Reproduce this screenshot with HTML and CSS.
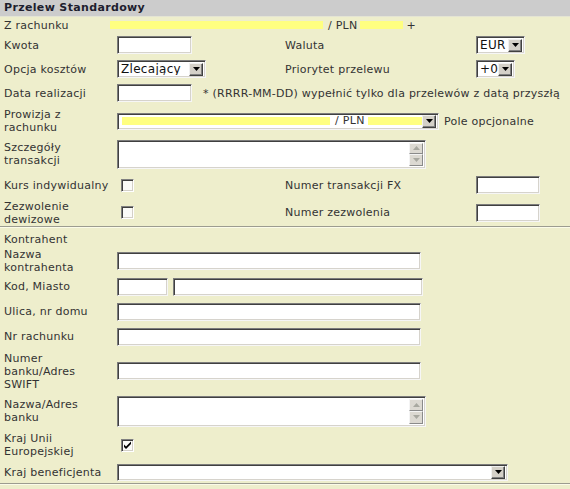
FILE: index.html
```html
<!DOCTYPE html>
<html lang="pl">
<head>
<meta charset="utf-8">
<title>Przelew Standardowy</title>
<link rel="stylesheet" href="styles.css">
</head>
<body>
<div class="head">Przelew Standardowy</div>

<div class="row h16">
  <span class="lbl lbl-short">Z rachunku</span>
  <span class="hl hl-a"></span><span class="acc">/ PLN</span><span class="hl hl-b"></span><span class="plus">+</span>
</div>

<div class="row h24">
  <span class="lbl">Kwota</span>
  <span class="c2"><input class="inp w75" type="text"></span>
  <span class="c3">Waluta</span>
  <span class="sel w49"><span class="sel-val">EUR</span><span class="sel-btn"><svg width="7" height="4" viewBox="0 0 7 4"><path d="M0 0h7L3.5 4z"/></svg></span></span>
</div>

<div class="row h24">
  <span class="lbl">Opcja kosztów</span>
  <span class="c2"><span class="sel w89"><span class="sel-val">Zlecający</span><span class="sel-btn"><svg width="7" height="4" viewBox="0 0 7 4"><path d="M0 0h7L3.5 4z"/></svg></span></span></span>
  <span class="c3">Priorytet przelewu</span>
  <span class="sel w39"><span class="sel-val">+0</span><span class="sel-btn"><svg width="7" height="4" viewBox="0 0 7 4"><path d="M0 0h7L3.5 4z"/></svg></span></span>
</div>

<div class="row h24">
  <span class="lbl">Data realizacji</span>
  <input class="inp w75" type="text">
  <span class="note">* (RRRR-MM-DD) wypełnić tylko dla przelewów z datą przyszłą</span>
</div>

<div class="row h32">
  <span class="lbl">Prowizja z rachunku</span>
  <span class="sel w322 sel-17"><span class="sel-val"><span class="hl hl-c"></span><span class="acc">/ PLN</span><span class="hl hl-d"></span></span><span class="sel-btn"><svg width="7" height="4" viewBox="0 0 7 4"><path d="M0 0h7L3.5 4z"/></svg></span></span>
  <span class="opt">Pole opcjonalne</span>
</div>

<div class="row h34">
  <span class="lbl">Szczegóły transakcji</span>
  <span class="ta w309"><span class="ta-body"></span><span class="ta-bar"><span class="sb-btn"><svg width="7" height="4" viewBox="0 0 7 4"><path d="M0 4h7L3.5 0z"/></svg></span><span class="sb-btn"><svg width="7" height="4" viewBox="0 0 7 4"><path d="M0 0h7L3.5 4z"/></svg></span></span></span>
</div>

<div class="row h28">
  <span class="lbl">Kurs indywidualny</span>
  <span class="c2"><span class="chk"></span></span>
  <span class="c3">Numer transakcji FX</span>
  <input class="inp w64" type="text">
</div>

<div class="row h28 sep">
  <span class="lbl">Zezwolenie dewizowe</span>
  <span class="c2"><span class="chk"></span></span>
  <span class="c3">Numer zezwolenia</span>
  <input class="inp w64" type="text">
</div>

<div class="row h21 pad-top">
  <span class="lbl">Kontrahent</span>
</div>

<div class="row h26">
  <span class="lbl">Nazwa kontrahenta</span>
  <input class="inp w304" type="text">
</div>

<div class="row h25">
  <span class="lbl">Kod, Miasto</span>
  <input class="inp w51" type="text">
  <input class="inp w250 gap6" type="text">
</div>

<div class="row h25">
  <span class="lbl">Ulica, nr domu</span>
  <input class="inp w304" type="text">
</div>

<div class="row h25">
  <span class="lbl">Nr rachunku</span>
  <input class="inp w304" type="text">
</div>

<div class="row h44">
  <span class="lbl">Numer banku/Adres SWIFT</span>
  <input class="inp w304" type="text">
</div>

<div class="row h36">
  <span class="lbl">Nazwa/Adres banku</span>
  <span class="ta w309 ta-30"><span class="ta-body"></span><span class="ta-bar"><span class="sb-btn"><svg width="7" height="4" viewBox="0 0 7 4"><path d="M0 4h7L3.5 0z"/></svg></span><span class="sb-btn"><svg width="7" height="4" viewBox="0 0 7 4"><path d="M0 0h7L3.5 4z"/></svg></span></span></span>
</div>

<div class="row h32">
  <span class="lbl">Kraj Unii Europejskiej</span>
  <span class="chk"><svg width="9" height="9" viewBox="0 0 9 9"><path d="M1 3.5l2 2 5-5v2.5L3 8 1 6z" fill="#000"/></svg></span>
</div>

<div class="row h23 sep">
  <span class="lbl">Kraj beneficjenta</span>
  <span class="sel w391 sel-17"><span class="sel-val"></span><span class="sel-btn"><svg width="7" height="4" viewBox="0 0 7 4"><path d="M0 0h7L3.5 4z"/></svg></span></span>
</div>
</body>
</html>
```
FILE: styles.css
```css
html, body {
  margin: 0;
  padding: 0;
}
body {
  background: #eeeecc;
  font-family: "DejaVu Sans", Verdana, sans-serif;
  font-size: 11px;
  letter-spacing: 0.25px;
  color: #333333;
  width: 570px;
  height: 489px;
  overflow: hidden;
}
.head {
  height: 17px;
  line-height: 16px;
  background: #cccccc;
  color: #1e1e2e;
  font-weight: bold;
  letter-spacing: 0.35px;
  padding-left: 4px;
  box-sizing: border-box;
  border-bottom: 1px solid #e4e4d4;
}
.row {
  display: flex;
  align-items: center;
  box-sizing: border-box;
}
.pad-top { padding-top: 4px; }
.sep {
  border-bottom: 1px solid #9c9c90;
  box-shadow: 0 1px 0 #fbfbe8;
}
.h16 { height: 16px; }
.h21 { height: 21px; }
.h23 { height: 23px; }
.h24 { height: 24px; }
.h25 { height: 25px; }
.h26 { height: 26px; }
.h28 { height: 28px; }
.h32 { height: 32px; }
.h34 { height: 34px; }
.h36 { height: 36px; }
.h44 { height: 44px; }

.lbl {
  flex: none;
  width: 106px;
  padding-left: 4px;
  margin-right: 7px;
  line-height: 13px;
  box-sizing: content-box;
}
.lbl-short { width: 106px; margin-right: 0; }
.c2 { flex: none; width: 168px; display: flex; align-items: center; }
.c3 { flex: none; width: 191px; }

.hl {
  display: inline-block;
  height: 8px;
  background: #ffff80;
}
.hl-a { width: 213px; }
.hl-b { width: 43px; margin-left: 3px; }
.hl-c { width: 208px; }
.hl-d { width: 54px; margin-left: 3px; }
.acc { margin-left: 5px; }
.plus { margin-left: 3px; }

.inp {
  box-sizing: border-box;
  height: 18px;
  margin: 0;
  padding: 0 2px;
  background: #ffffff;
  border: 1px solid;
  border-color: #7c7c7c #f6f6f6 #f6f6f6 #7c7c7c;
  box-shadow: inset 1px 1px 0 #404040, inset -1px -1px 0 #d6d3cc;
  font: inherit;
  flex: none;
}
.w51 { width: 51px; }
.w64 { width: 64px; }
.w75 { width: 75px; }
.w250 { width: 250px; }
.w304 { width: 304px; }
.gap6 { margin-left: 5px; }

.note { margin-left: 11px; white-space: nowrap; }
.opt { margin-left: 5px; }

.sel {
  box-sizing: border-box;
  height: 18px;
  display: flex;
  align-items: center;
  background: #ffffff;
  border: 1px solid;
  border-color: #7c7c7c #f6f6f6 #f6f6f6 #7c7c7c;
  box-shadow: inset 1px 1px 0 #404040, inset -1px -1px 0 #d6d3cc;
  padding: 2px;
  flex: none;
  color: #111;
}
.sel-17 { height: 17px; }
.w39 { width: 39px; }
.w49 { width: 49px; }
.w89 { width: 89px; }
.w322 { width: 322px; }
.w391 { width: 391px; }
.sel-val {
  flex: 1;
  display: flex;
  align-items: center;
  padding-left: 1px;
  overflow: hidden;
  white-space: nowrap;
  font-size: 12px;
  line-height: 12px;
  letter-spacing: 0.3px;
}
.sel-17 .sel-val { font-size: 11px; color: #333; padding-left: 2px; }
.sel-btn {
  flex: none;
  width: 14px;
  height: 13px;
  box-sizing: border-box;
  background: #d4d0c8;
  border: 1px solid;
  border-color: #f0f0f0 #404040 #404040 #f0f0f0;
  box-shadow: inset -1px -1px 0 #808080;
  display: flex;
  align-items: center;
  justify-content: center;
}
.sel-btn svg { fill: #000; }

.ta {
  box-sizing: border-box;
  height: 29px;
  display: flex;
  background: #ffffff;
  border: 1px solid;
  border-color: #7c7c7c #f6f6f6 #f6f6f6 #7c7c7c;
  box-shadow: inset 1px 1px 0 #404040, inset -1px -1px 0 #d6d3cc;
  padding: 2px;
  flex: none;
}
.ta-30 { height: 31px; }
.w309 { width: 309px; }
.ta-body { flex: 1; }
.ta-bar {
  flex: none;
  width: 14px;
  display: flex;
  flex-direction: column;
}
.sb-btn {
  flex: 1;
  box-sizing: border-box;
  background: #dcd9d2;
  border: 1px solid;
  border-color: #f4f4f4 #8a8a8a #8a8a8a #f4f4f4;
  display: flex;
  align-items: center;
  justify-content: center;
}
.sb-btn svg { fill: #a8a8a0; }

.chk {
  flex: none;
  box-sizing: border-box;
  width: 13px;
  height: 13px;
  margin-left: 4px;
  background: #fbfbf8;
  border: 1px solid;
  border-color: #808080 #ffffff #ffffff #808080;
  box-shadow: inset 1px 1px 0 #404040, inset -1px -1px 0 #d4d0c8;
  display: flex;
  align-items: center;
  justify-content: center;
}
```
